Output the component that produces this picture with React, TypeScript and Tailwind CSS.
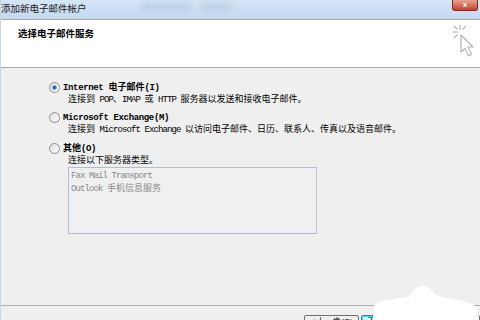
import React from "react";

const L = ({ children }: { children: React.ReactNode }) => (
  <span className="tracking-[-0.9px]" style={{ fontFamily: '"Liberation Mono", monospace' }}>{children}</span>
);

const B = ({ children }: { children: React.ReactNode }) => (
  <span className="tracking-[-0.35px]" style={{ fontFamily: '"Liberation Mono", monospace' }}>{children}</span>
);

const Radio = ({ checked }: { checked?: boolean }) => (
  <div className="w-[11px] h-[11px] rounded-full border border-[#8e8f8f] bg-gradient-to-br from-[#dcdcdc] to-[#ffffff] flex items-center justify-center shrink-0">
    {checked && <div className="w-[5px] h-[5px] rounded-full bg-[#2a5fb0] border border-[#6fa0e0]" />}
  </div>
);

export default function App() {
  return (
    <div
      className="relative w-[480px] h-[320px] overflow-hidden bg-[#efefef] text-[9px] text-black flex flex-col border-l border-[#c8d4e2]"
      style={{ fontFamily: '"Noto Sans CJK SC", "Liberation Sans", sans-serif' }}
    >
      {/* title bar */}
      <div className="h-[19px] shrink-0 bg-gradient-to-b from-[#d6e5f6] to-[#c4d9f1] flex items-start relative">
        <span className="text-[9.5px] leading-[17px] text-[#1a1a1a]">添加新电子邮件帐户</span>
        <div className="absolute left-[140px] top-[3px] w-[50px] h-[8px] bg-[#b0c4dc] blur-[3px] opacity-60" />
        <div className="absolute left-[200px] top-[3px] w-[30px] h-[8px] bg-[#b0c4dc] blur-[3px] opacity-60" />
        <div className="absolute right-[2px] top-0 w-[26px] h-[11px] rounded-b-[3px] bg-gradient-to-b from-[#e8a092] to-[#c2402a] border border-[#8a2a1e] border-t-0 flex items-center justify-center">
          <span className="text-white text-[8px] font-bold leading-none" style={{ fontFamily: '"Liberation Sans", sans-serif' }}>x</span>
        </div>
      </div>

      {/* header */}
      <div className="h-[49px] shrink-0 bg-white border-t border-b border-[#a8a8a8] relative pl-[17px] pt-[6px]">
        <div className="font-bold text-[9.5px] leading-[14px]">选择电子邮件服务</div>
        <svg className="absolute left-[449px] top-[4px]" width="28" height="40" viewBox="0 0 28 40" fill="none">
          <g stroke="#b8b8b8" strokeWidth="1.2">
            <line x1="10" y1="1" x2="10" y2="6" />
            <line x1="3" y1="8" x2="8" y2="8" />
            <line x1="4" y1="2" x2="7.5" y2="5.5" />
            <line x1="16" y1="2" x2="12.5" y2="5.5" />
            <line x1="4" y1="14" x2="7.5" y2="10.5" />
          </g>
          <path d="M11 11 L11 28 L15 24.5 L18.5 32 L21.5 30.5 L18 23 L23 23 Z" fill="white" stroke="#b0b0b0" strokeWidth="1.1" strokeLinejoin="round" />
        </svg>
      </div>

      {/* body */}
      <div className="flex-1 pl-[48px] pt-[13px] flex flex-col">
        <div className="flex items-center h-[12px] gap-[3px]">
          <Radio checked />
          <span className="font-bold leading-[12px]"><B>Internet </B>电子邮件<B>(I)</B></span>
        </div>
        <div className="pl-[19px] h-[12px] leading-[12px] whitespace-nowrap">连接到<L> POP</L>、<L>IMAP </L>或<L> HTTP </L>服务器以发送和接收电子邮件。</div>

        <div className="flex items-center h-[12px] gap-[3px] mt-[6px]">
          <Radio />
          <span className="font-bold leading-[12px]"><B>Microsoft Exchange(M)</B></span>
        </div>
        <div className="pl-[19px] h-[12px] leading-[12px] whitespace-nowrap">连接到<L> Microsoft Exchange </L>以访问电子邮件、日历、联系人、传真以及语音邮件。</div>

        <div className="flex items-center h-[12px] gap-[3px] mt-[7px]">
          <Radio />
          <span className="font-bold leading-[12px]">其他<B>(O)</B></span>
        </div>
        <div className="pl-[19px] h-[12px] leading-[12px]">连接以下服务器类型。</div>

        <div className="ml-[19px] mt-[1px] w-[249px] h-[67px] border border-[#a9c2dc] border-r-[#bcc6d2] border-b-[#b4bcc8] bg-[#f0f0f0] px-[2px] pt-[1px] text-[#8a8a8a]">
          <div className="leading-[11px]"><L>Fax Mail Transport</L></div>
          <div className="leading-[11px]"><L>Outlook </L>手机信息服务</div>
        </div>
      </div>

      {/* footer */}
      <div className="h-[15px] shrink-0 border-t border-[#b0b0b0] relative">
        <div className="absolute left-[303px] top-[9px] w-[55px] h-[20px] rounded-[2px] border border-[#707070] bg-gradient-to-b from-[#f2f2f2] to-[#dcdcdc] text-[8px] leading-[10px] flex justify-center">
          <span>&lt; 上一步<L>(B)</L></span>
        </div>
        <div className="absolute left-[360px] top-[9px] w-[55px] h-[20px] rounded-[2px] border border-[#3c7fb1] bg-gradient-to-b from-[#eaf6fd] to-[#bee6fd] text-[8px] leading-[10px] flex justify-center shadow-[inset_0_0_0_1px_#48d0f8]">
          <span>下一步<L>(N)</L> &gt;</span>
        </div>
        <div className="absolute left-[424px] top-[9px] w-[55px] h-[20px] rounded-[2px] border border-[#707070] bg-gradient-to-b from-[#f2f2f2] to-[#dcdcdc] text-[8px] leading-[10px] flex justify-center">
          <span>取消</span>
        </div>
      </div>

      {/* white smudge overlay */}
      <svg className="absolute left-[368px] top-[282px]" width="112" height="38" viewBox="0 0 112 38">
        <path d="M5 24 C 8 18, 30 16, 40 15 C 44 6, 52 2, 58 5 C 64 8, 66 14, 76 16 C 90 18, 104 20, 108 26 L 110 38 L 4 38 Z" fill="#ffffff" />
      </svg>
    </div>
  );
}
